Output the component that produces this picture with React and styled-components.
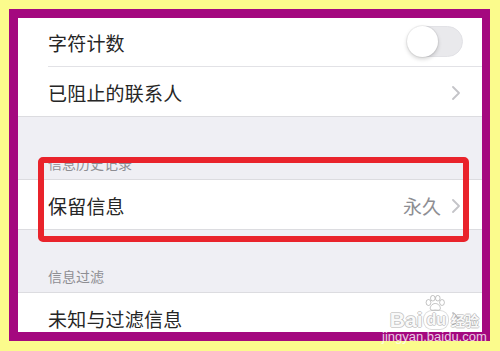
import styled, { createGlobalStyle } from 'styled-components';

const GlobalStyle = createGlobalStyle`
  html, body {
    margin: 0;
    padding: 0;
    background: #fbfb8c;
  }
  * {
    box-sizing: border-box;
  }
`;

const Frame = styled.div`
  position: relative;
  width: 500px;
  height: 351px;
  padding: 9px 10px 10px 9px;
  background: #fbfb8c;
  font-family: "Noto Sans CJK SC", "Noto Sans", sans-serif;
`;

const Screen = styled.div`
  position: relative;
  width: 100%;
  height: 100%;
  border-style: solid;
  border-color: #a4087f;
  border-width: 9px 8px 9px 9px;
  overflow: hidden;
  background: #efeff4;
`;

const List = styled.div`
  display: flex;
  flex-direction: column;
  margin-top: -1px;
`;

const Group = styled.div`
  background: #fff;
  border-bottom: 1px solid #dcdce0;
  ${({ $top }) => $top && 'border-top: 1px solid #dcdce0;'}
`;

const Row = styled.div`
  display: flex;
  align-items: center;
  height: ${({ $last }) => ($last ? '49px' : '50px')};
  margin-left: 30px;
  padding: 2px 22px 0 0;
  border-bottom: ${({ $last }) => ($last ? 'none' : '1px solid #e2e2e6')};
`;

const Label = styled.span`
  flex: 1;
  font-size: 19px;
  color: #262626;
  letter-spacing: 0.2px;
`;

const Detail = styled.span`
  font-size: 19px;
  color: #8e8e93;
  margin-right: 11px;
`;

const SectionHeader = styled.div`
  display: flex;
  align-items: flex-end;
  height: 62px;
  padding: 0 0 6px 30px;
  font-size: 14px;
  color: #8e8e93;
`;

const Toggle = styled.div`
  position: relative;
  width: 56px;
  height: 31px;
  margin-right: -3px;
  margin-top: -3px;
  border-radius: 16px;
  background: #e9e9ec;
  border: 1px solid #e2e2e6;
`;

const Knob = styled.div`
  position: absolute;
  left: -1px;
  top: -1px;
  width: 31px;
  height: 31px;
  border-radius: 50%;
  background: #fff;
  box-shadow: 0 2px 4px rgba(0, 0, 0, 0.18), 0 0 0 1px rgba(0, 0, 0, 0.05);
`;

const Highlight = styled.div`
  position: absolute;
  left: 20px;
  top: 139px;
  width: 431px;
  height: 85px;
  border: 6px solid #e9232b;
  border-radius: 5px;
`;

const Watermark = styled.div`
  position: absolute;
  left: 382px;
  top: 296px;
  display: flex;
  flex-direction: column;
  align-items: center;
  white-space: nowrap;
  color: rgba(255, 255, 255, 0.95);
  pointer-events: none;
`;

const MarkLine = styled.div`
  position: relative;
  display: flex;
  align-items: center;
  margin-top: 15px;
  font-family: "Liberation Sans", Arial, sans-serif;
  font-size: 21px;
  font-weight: bold;
  line-height: 18px;
  text-shadow: 1px 0 0 rgba(150, 150, 150, 0.45), -1px 0 0 rgba(150, 150, 150, 0.45),
    0 1px 0 rgba(150, 150, 150, 0.45), 0 -1px 0 rgba(150, 150, 150, 0.45);
`;

const MarkDu = styled.span`
  font-size: 16px;
  margin-left: 2px;
  padding: 0 2px;
  border-radius: 8px;
  box-shadow: 0 0 0 1px rgba(150, 150, 150, 0.35);
`;

const MarkCjk = styled.span`
  font-family: "Noto Sans CJK SC", sans-serif;
  font-size: 14px;
  margin-left: 3px;
`;

const MarkUrl = styled.div`
  font-family: "Liberation Sans", Arial, sans-serif;
  font-size: 13px;
  line-height: 13px;
  margin-top: 1px;
  color: rgba(255, 255, 255, 0.8);
`;

const PawIcon = styled.svg`
  position: absolute;
  left: 34px;
  top: -16px;
`;

const Chevron = () => (
  <svg width="8" height="14" viewBox="0 0 8 14">
    <polyline points="1,1 7,7 1,13" fill="none" stroke="#c4c4c8" strokeWidth="1.8" strokeLinecap="round" strokeLinejoin="round" />
  </svg>
);

const Paw = () => (
  <PawIcon width="22" height="17" viewBox="0 0 22 17">
    <g fill="rgba(255,255,255,0.9)" stroke="rgba(130,130,130,0.6)" strokeWidth="0.8">
      <ellipse cx="4.5" cy="7.5" rx="2.4" ry="3" />
      <ellipse cx="8.8" cy="3.2" rx="2.3" ry="2.8" />
      <ellipse cx="13.8" cy="3.2" rx="2.3" ry="2.8" />
      <ellipse cx="18" cy="7.5" rx="2.4" ry="3" />
      <path d="M11.3 8.5 C7.8 8.5 5.8 12 6.3 14 C6.8 16 9.8 15 11.3 15 C12.8 15 15.8 16 16.3 14 C16.8 12 14.8 8.5 11.3 8.5 Z" />
    </g>
  </PawIcon>
);

const App = () => (
  <Frame>
    <GlobalStyle />
    <Screen>
      <List>
        <Group>
          <Row>
            <Label>字符计数</Label>
            <Toggle>
              <Knob />
            </Toggle>
          </Row>
          <Row $last>
            <Label>已阻止的联系人</Label>
            <Chevron />
          </Row>
        </Group>
        <SectionHeader>信息历史记录</SectionHeader>
        <Group $top>
          <Row $last>
            <Label>保留信息</Label>
            <Detail>永久</Detail>
            <Chevron />
          </Row>
        </Group>
        <SectionHeader>信息过滤</SectionHeader>
        <Group $top>
          <Row $last>
            <Label>未知与过滤信息</Label>
            <Chevron />
          </Row>
        </Group>
      </List>
      <Highlight />
    </Screen>
    <Watermark>
      <MarkLine>
        <Paw />
        Bai<MarkDu>du</MarkDu><MarkCjk>经验</MarkCjk>
      </MarkLine>
      <MarkUrl>jingyan.baidu.com</MarkUrl>
    </Watermark>
  </Frame>
);

export default App;
